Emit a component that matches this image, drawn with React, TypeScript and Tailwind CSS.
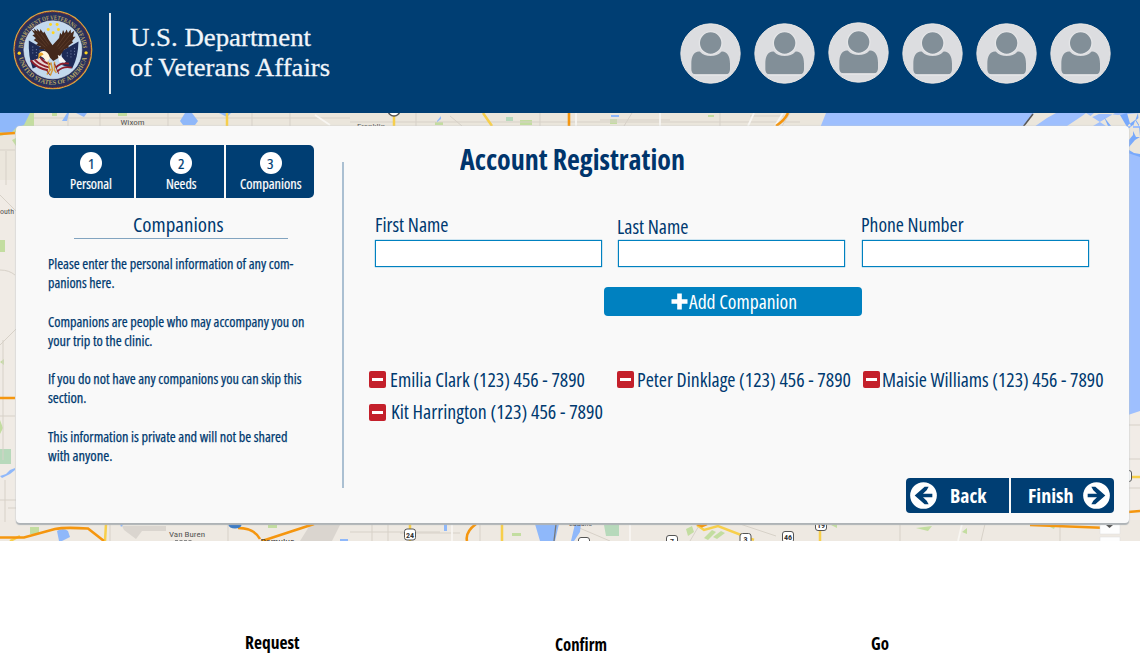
import { useLayoutEffect, useRef } from "react";

/* Single line of text, condensed or expanded to the width its box is given. */
function Fit({ children, className = "" }: { children: string; className?: string }) {
  const box = useRef<HTMLSpanElement>(null);
  const ink = useRef<HTMLSpanElement>(null);
  useLayoutEffect(() => {
    if (!box.current || !ink.current) return;
    ink.current.style.transform = "none";
    const ratio = box.current.getBoundingClientRect().width / ink.current.getBoundingClientRect().width;
    ink.current.style.transform = `scaleX(${ratio})`;
  }, [children]);
  return (
    <span ref={box} className={`block shrink-0 whitespace-nowrap ${className}`}>
      <span ref={ink} className="inline-block origin-left">
        {children}
      </span>
    </span>
  );
}

function Seal() {
  return (
    <svg className="mt-[9.5px] ml-[12.5px] size-[80px] shrink-0" viewBox="38 27 243 243">
      <defs>
        <path id="arcTop" d="M68 148 A91 91 0 0 1 250 148" />
        <path id="arcBottom" d="M53 148 A106 106 0 0 0 265 148" />
      </defs>
      <circle cx="159" cy="148" r="118" fill="#27305d" stroke="#d9a441" strokeWidth="4" />
      <circle cx="159" cy="148" r="115" fill="none" stroke="#8c2b2b" strokeWidth="3" strokeDasharray="5 3" />
      <circle cx="159" cy="148" r="88" fill="#c3d9ee" stroke="#dfe6ee" strokeWidth="2" />
      <text fill="#b9a767" fontSize="20" fontFamily="Liberation Serif, serif" fontWeight="700">
        <textPath href="#arcTop" startOffset="5" textLength="276" lengthAdjust="spacingAndGlyphs">
          DEPARTMENT OF VETERANS AFFAIRS
        </textPath>
      </text>
      <text fill="#b9a767" fontSize="20" fontFamily="Liberation Serif, serif" fontWeight="700">
        <textPath href="#arcBottom" startOffset="24" textLength="284" lengthAdjust="spacingAndGlyphs">
          UNITED STATES OF AMERICA
        </textPath>
      </text>
      <g fill="#ffd51e">
        <circle cx="57" cy="158" r="5" />
        <circle cx="260" cy="157" r="5" />
        <circle cx="152" cy="71" r="4.5" />
        <circle cx="172" cy="71" r="4.5" />
        <circle cx="145" cy="86" r="4.5" />
        <circle cx="176" cy="86" r="4.5" />
        <circle cx="160" cy="96" r="4.5" />
      </g>
      <path d="M86 120 L140 150 L132 190 L98 205 Q84 170 86 120Z" fill="#1d2b57" />
      <path d="M237 123 L185 152 L188 195 L218 205 Q236 170 237 123Z" fill="#1d2b57" />
      <path d="M98 138v22M109 146v24M120 150v18M225 142v22M214 150v24M203 156v16" stroke="#8f9dc0" strokeWidth="2.5" strokeDasharray="3 6" />
      <path d="M92 182 L120 172 L148 186 L152 212 L122 208Z" fill="#e6d5d4" />
      <path d="M92 180 Q112 205 144 210M104 178 Q120 196 150 202M122 172 Q132 188 152 192M216 202 Q190 196 172 214M208 190 Q184 184 168 202" stroke="#8f1f2c" strokeWidth="6" fill="none" />
      <path d="M94 86 L104 92 L101 83 L112 92 L110 83 L120 93 L121 85 L130 97 L133 92 L147 118 L158 134 L178 112 L181 96 L186 102 L190 88 L195 98 L201 86 L205 97 L213 86 L214 98 L224 90 L220 108 L228 108 L217 122 L221 125 L206 136 L208 140 L193 148 L177 172 L160 182 L143 164 L128 157 L135 147 L116 145 L123 139 L108 133 L114 127 L101 118 L108 113 L97 104 L104 101Z" fill="#44281b" />
      <path d="M108 96 L142 137M122 98 L147 132M106 114 L136 140M214 98 L177 145M200 98 L172 138M212 118 L181 150" stroke="#654330" strokeWidth="2" />
      <path d="M116 164 Q120 148 136 152 Q148 158 150 174 L141 184 L130 172Z" fill="#fff5de" />
      <path d="M116 158 Q126 152 131 162 L120 168 L114 178Z" fill="#e9a62a" />
      <path d="M174 164 L186 169 L199 184 L194 187 L179 186Z" fill="#f5f5f5" />
      <path d="M145 184 L150 211 L141 223M153 186 L158 209 L151 227M164 184 L164 210 L170 218M154 207 L143 216" stroke="#d59a38" strokeWidth="4.5" fill="none" />
      <path d="M137 207 L150 224M164 190 L177 221" stroke="#8b2430" strokeWidth="3" />
    </svg>
  );
}

function Avatar({ className = "" }: { className?: string }) {
  return (
    <svg className={`size-[61px] shrink-0 ${className}`} viewBox="0 0 183 183">
      <circle cx="91.5" cy="91.5" r="89" fill="#dcdde0" stroke="#e9e6e3" strokeWidth="3" />
      <path
        d="M60 86 C42 84 34 101 34 122 L34 139 Q34 154 47 154 L137 154 Q150 154 150 139 L150 122 C150 101 141 84 124 86 Q112 99 92 99 Q72 99 60 86Z"
        fill="#828f98"
      />
      <path d="M42 156H142" stroke="#eeeeee" strokeWidth="2.5" />
      <circle cx="92" cy="60" r="34" fill="#828f98" stroke="#e4e5e7" strokeWidth="4" />
    </svg>
  );
}

function RouteBadge({ x, y, label }: { x: number; y: number; label: string }) {
  return (
    <g>
      <rect x={x - 5.5} y={y - 5.5} width="11" height="11" rx="2.5" fill="#fff" stroke="#555" />
      <text x={x} y={y + 3} textAnchor="middle" fontSize="8" fontWeight="700" fill="#333">
        {label}
      </text>
    </g>
  );
}

function MapCanvas() {
  return (
    <svg className="col-start-1 row-start-1 h-[428px] w-[1140px]" viewBox="0 113 1140 428" fontFamily="Roboto, sans-serif">
      <rect y="113" width="1140" height="428" fill="#ebe6dc" />
      <rect y="180" width="20" height="361" fill="#f0ebe5" />
      <rect x="1120" y="400" width="20" height="141" fill="#f1ece7" />
      <rect y="520" width="1140" height="21" fill="#eee9e2" />

      {/* parks */}
      <g fill="#c3dda0">
        <path d="M0 113H34V128L0 136Z" />
        <path d="M0 240h5v12H0zM0 420l3 8-3 6zM0 362l4-3v6zM30 527h9v7h-9z" />
        <path d="M12 140l4 6v-8zM118 113h9v3h-9zM52 113h5v3h-5zM435 122h8v3h-8zM520 120h12v5h-12zM610 119h7v5h-7zM708 115h6v2h-6zM268 525h9v3h-9zM512 533h9v3h-9zM686 529l6-3 2 6-6 4zM704 538l8-8 4 2-8 8zM713 537l8-6 4 2-8 6zM916 528l16-2-4 5zM962 532l5-4v6zM831 525l6-2v5zM1048 526l8-2-2 5z" />
      </g>
      <path d="M0 449h11v15H0zM506 117h7v4h-7zM604 525l15-2v13h-13z" fill="#b7d9bb" />
      <path d="M122 526h44v5h-24l-6 8-12-9zM310 525h30l-8 16h-32z" fill="#dad5cf" />

      {/* local roads */}
      <g stroke="#d7d1c8" fill="none">
        <path d="M34 118H350M350 122H800M68 113v13M100 113v13M168 113v13M252 113v13M290 113v13M416 113v13M450 116l12 10M540 113v13M600 120h70M632 113l-8 13M720 113v13M750 116h34M790 113l-8 13" />
        <path d="M0 150h15M6 151v34M0 195l16 16M0 270q9 0 15 5M0 345l16-16M3 340v120M0 416h15M0 500h16M5 480v42M8 508h8" />
        <path d="M110 524v17M228 524v17M350 532h90M372 524v17M388 524v17M480 524v17M570 524l40 17M700 524l-10 17M740 524l36 12M900 524v17M985 524l-4 17M1060 524v17M400 533h60M1129 425h11M1129 459h11M1129 488h11" />
      </g>
      <g stroke="#f8f6f2" strokeWidth="1.8" fill="none">
        <path d="M315 115l15 10M576 113v13M660 113v13M748 126l6-13M775 126l8-13M452 524v17M630 524v17M958 541l4-17" />
      </g>

      {/* water */}
      <g fill="#8fb8fa">
        <path d="M0 113h30l-6 12-8 3-6 6-10-2zM62 121l5-8h2l-2 8zM76 113h11l-3 4zM180 121l5-8h7l6 8-3 4h-12zM219 113h12l-4 4zM437 121l4-5v3l-4 3z" />
        <path d="M57 531q6-4 11 0l2 6-8 4h-3zM120 524l4 0-3 3zM444 524h3v7h-3zM535 524h24l-4 17h-15zM575 524h6l-1 8-6 9h-3zM340 539h8v2h-8zM611 115h8v2h-8z" />
        <path d="M0 476l6-2 4-4 5-2v2l-5 4-8 4z" />
      </g>
      <path d="M826 113H1140V128H820Z" fill="#9ebffe" />
      <path d="M1086 113l-4 3-15 10h26l22-13zM1086 120l15-7h-7zM1086 113h12l20 2 22-2v13h-34z" fill="#ebe6dc" />
      <path d="M1034 113H1056l-9 5-13 9h-12z" fill="#ebe6dc" />
      <path d="M1120 115l7 12h4l-4-14zM1104 117l7 9h-3zM1138 113l-6 16 4 8h4zM1128 160V125l7-5 5 8v40z" fill="#78a9fc" />
      <path d="M1128 129l5-4v10l-5 6zM1129 147l6-7 5-3v17l-6-1-5-3zM1136 120l4-3v9z" fill="#ebe6dc" />
      <path d="M1128 153l12 4V411l-12 4z" fill="#9ebffe" />
      <path d="M1023 127l10-13" stroke="#555" strokeWidth="1.5" />
      <path d="M556 524l-2 17" stroke="#777" strokeWidth="1.3" />

      {/* highways */}
      <g fill="none" stroke="#f7cf4b" strokeWidth="2.5">
        <path d="M227 113v13M394 116v11M483 113l9 13M106 524l-1 17M410 524v17M502 524v17M697 525l7 5 14-4 36 14M820 526v15M1132 477h8M10 541l10-5" />
      </g>
      <g fill="none" stroke="#f5960f" strokeWidth="2.6">
        <path d="M569 113v13M788 113q-3 7-12 13M0 134l15-1M0 398h15M0 537.5H24L55 529Q64 527 88 528.5L104 541" />
        <path d="M238 528q16 0 22 11M262 541L314 524M476 524q-11 8-9 17M697 524l5 2 5-2M1030 525l78 3M1128 512l12-1" />
      </g>

      <text x="120.5" y="125" fontSize="8" fill="#555" textLength="24" lengthAdjust="spacingAndGlyphs">Wixom</text>
      <text x="357" y="128.5" fontSize="8" fill="#555" textLength="28" lengthAdjust="spacingAndGlyphs">Franklin</text>
      <text x="0" y="213.5" fontSize="7.5" fill="#555" textLength="14" lengthAdjust="spacingAndGlyphs">outh</text>
      <text x="169" y="537" fontSize="8" fill="#555" textLength="36" lengthAdjust="spacingAndGlyphs">Van Buren</text>
      <text x="260.5" y="543.5" fontSize="8" fill="#333" textLength="34" lengthAdjust="spacingAndGlyphs">Romulus</text>
      <text x="569" y="526" fontSize="8" fill="#555">LaSalle</text>
      <path d="M175 540.5h17" stroke="#888" strokeDasharray="3 1.5" />
      <circle cx="394" cy="110" r="6" fill="#fff" stroke="#555" strokeWidth="1.5" />
      <ellipse cx="235" cy="525" rx="6.5" ry="3.5" fill="#3f7cc4" />
      <RouteBadge x={410} y={534.5} label="24" />
      <RouteBadge x={584} y={543} label="20" />
      <RouteBadge x={672} y={541} label="7" />
      <RouteBadge x={745.5} y={539} label="3" />
      <RouteBadge x={788} y={537} label="46" />
      <RouteBadge x={821} y={525} label="19" />
      <RouteBadge x={1126} y={476} label="" />
      <path d="M1100 523h20v11h-20zM1100 537h20v6h-20z" fill="#fdfdfd" stroke="#ddd" strokeWidth=".5" />
      <path d="M1106 525h7l-3.5 3z" fill="#555" />
    </svg>
  );
}

const cond = "font-['Open_Sans',sans-serif] [font-stretch:75%]";

function Step({ n, children }: { n: string; children: React.ReactNode }) {
  return (
    <>
      <span className="flex size-[22px] items-center justify-center rounded-full bg-white text-[15px] leading-[22px] text-[#003e73]">
        <Fit className="w-[6.5px]">{n}</Fit>
      </span>
      {children}
    </>
  );
}

function Field({ children }: { children: React.ReactNode }) {
  return (
    <label className="flex w-[227px] flex-col">
      <span className="flex h-[29.5px]">{children}</span>
      <input className="h-[27px] border border-[#0081c0] bg-white px-2 text-base shadow-[0_0_1px_#0081c0] outline-none" />
    </label>
  );
}

function Minus() {
  return (
    <svg className="mt-[6.5px] size-[17px] shrink-0" viewBox="0 0 17 17">
      <rect width="17" height="17" rx="2" fill="#c4202b" />
      <rect x="3" y="7" width="11" height="3" fill="#fff" />
    </svg>
  );
}

function Arrow({ className = "" }: { className?: string }) {
  return (
    <svg className={`size-[27px] shrink-0 ${className}`} viewBox="0 0 81 81">
      <circle cx="40.5" cy="40.5" r="40" fill="#fff" />
      <path d="M44 14H56L50 25L39 35H67V46H39L50 56L56 67H44L14 40.5Z" fill="#003e73" />
    </svg>
  );
}

export default function App() {
  return (
    <div className={`h-[654px] w-[1140px] overflow-hidden bg-white text-[#003a70] ${cond}`}>
      <header className="flex h-[113px] items-start bg-[#003e73]">
        <Seal />
        <div className="mt-[13px] ml-[16.5px] h-[81px] w-[2px] bg-[#dfe7ee]" />
        <div className="mt-[23px] ml-[19px] flex flex-col font-['Liberation_Serif',serif] text-[26px] leading-[29.5px] text-[#f1f5fa] [-webkit-text-stroke:0.3px_#f1f5fa]">
          <Fit className="w-[181px]">U.S. Department</Fit>
          <Fit className="w-[200px]">of Veterans Affairs</Fit>
        </div>
        <div className="mt-[23px] mr-[29px] ml-auto flex gap-[13px]">
          <Avatar />
          <Avatar />
          <Avatar className="-mt-px" />
          <Avatar />
          <Avatar />
          <Avatar />
        </div>
      </header>

      <main className="grid h-[428px] overflow-hidden">
        <MapCanvas />
        <section className="z-10 col-start-1 row-start-1 mt-[12.5px] ml-[16px] flex h-[397px] w-[1112.5px] rounded-[4px] bg-[#f9f9f9] shadow-[0_1.5px_1px_#aeb3b6,0_0_2px_#c5cacd]">
          <aside className="flex w-[326px] flex-col pt-[19px] pl-[32.5px]">
            <nav className="flex h-[53px] w-[265.5px] gap-[2px] overflow-hidden rounded-[5px] text-[14.5px] leading-[20px] text-white [-webkit-text-stroke:0.2px]">
              <div className="flex w-[85px] flex-col items-center bg-[#003e73] pt-[7.5px]">
                <Step n="1"><Fit className="w-[42px]">Personal</Fit></Step>
              </div>
              <div className="flex w-[88.5px] flex-col items-center bg-[#003e73] pt-[7.5px] pl-[2px]">
                <Step n="2"><Fit className="w-[30.5px]">Needs</Fit></Step>
              </div>
              <div className="flex w-[88px] flex-col items-center bg-[#003e73] pt-[7.5px] pl-[1px]">
                <Step n="3"><Fit className="w-[61.5px]">Companions</Fit></Step>
              </div>
            </nav>
            <h2 className="mt-[12.5px] ml-[25.5px] flex h-[28.5px] w-[214px] border-b border-[#82a4c0] pl-[58.5px] text-[20.5px] leading-[29px]">
              <Fit className="w-[90.5px]">Companions</Fit>
            </h2>
            <div className="mt-[15.5px] -ml-[0.3px] flex flex-col text-[15px] leading-[19.2px] [-webkit-text-stroke:0.25px]">
              <Fit className="w-[245.5px]">Please enter the personal information of any com-</Fit>
              <Fit className="mb-[19.2px] w-[66.5px]">panions here.</Fit>
              <Fit className="w-[256.5px]">Companions are people who may accompany you on</Fit>
              <Fit className="mb-[19.2px] w-[104.5px]">your trip to the clinic.</Fit>
              <Fit className="w-[253.5px]">If you do not have any companions you can skip this</Fit>
              <Fit className="mb-[19.2px] w-[38.5px]">section.</Fit>
              <Fit className="w-[239.5px]">This information is private and will not be shared</Fit>
              <Fit className="w-[64.5px]">with anyone.</Fit>
            </div>
          </aside>
          <div className="mt-[36.5px] h-[326px] w-[2px] bg-[#abc0d2]" />
          <div className="flex grow flex-col pt-[15.5px]">
            <h1 className="ml-[116px] flex text-[28px] leading-[36px] font-bold text-[#00356c]">
              <Fit className="w-[225px]">Account Registration</Fit>
            </h1>
            <form className="mt-[33px] ml-[31px] flex gap-[16.3px] text-[20.5px] leading-[28px]">
              <Field><Fit className="w-[73.5px]">First Name</Fit></Field>
              <Field><Fit className="mt-[2px] -ml-[1.5px] w-[71.5px]">Last Name</Fit></Field>
              <Field><Fit className="-ml-px w-[102.5px]">Phone Number</Fit></Field>
            </form>
            <button className="mt-[20.5px] ml-[259.5px] flex h-[28.5px] w-[258px] items-center justify-center gap-[1px] rounded-[4px] bg-[#0081c0] pl-[2px] text-[20.5px] leading-[28px] text-white">
              <svg className="mt-[1px] size-[17px]" viewBox="0 0 17 17">
                <path d="M8.5 .5V16.5M.5 8.5H16.5" stroke="#fff" strokeWidth="4.6" />
              </svg>
              <Fit className="w-[108px]">Add Companion</Fit>
            </button>
            <ul className="mt-[49px] ml-[25px] grid grid-cols-[248px_246px_246px] gap-y-[4.5px] text-[20.5px] leading-[28px]">
              <li className="flex gap-[4px]"><Minus /><Fit className="w-[195px]">Emilia Clark (123) 456 - 7890</Fit></li>
              <li className="flex gap-[2.5px]"><Minus /><Fit className="w-[214px]">Peter Dinklage (123) 456 - 7890</Fit></li>
              <li className="flex gap-[1.5px]"><Minus /><Fit className="w-[221.5px]">Maisie Williams (123) 456 - 7890</Fit></li>
              <li className="flex gap-[4.5px]"><Minus /><Fit className="w-[212px]">Kit Harrington (123) 456 - 7890</Fit></li>
            </ul>
            <div className="mt-[53px] ml-[561.5px] flex h-[34.5px] w-[208.5px] gap-[1.5px] overflow-hidden rounded-[4px] text-[20px] leading-[28px] font-bold text-white">
              <button className="flex w-[103.5px] items-center bg-[#003e73] pl-[4px]">
                <Arrow />
                <Fit className="mt-[2px] ml-[13px] w-[36.5px]">Back</Fit>
              </button>
              <button className="flex w-[103.5px] items-center bg-[#003e73] pl-[17px]">
                <Fit className="mt-[2px] w-[45.5px]">Finish</Fit>
                <Arrow className="ml-[9.5px] rotate-180" />
              </button>
            </div>
          </div>
        </section>
      </main>

      <footer className="flex h-[113px] items-start pt-[92px] text-[17px] leading-[19px] font-bold text-black">
        <Fit className="ml-[244.5px] w-[54.5px]">Request</Fit>
        <Fit className="mt-[1.5px] ml-[255.5px] w-[52px]">Confirm</Fit>
        <Fit className="mt-[1px] ml-[264px] w-[18px]">Go</Fit>
      </footer>
    </div>
  );
}
